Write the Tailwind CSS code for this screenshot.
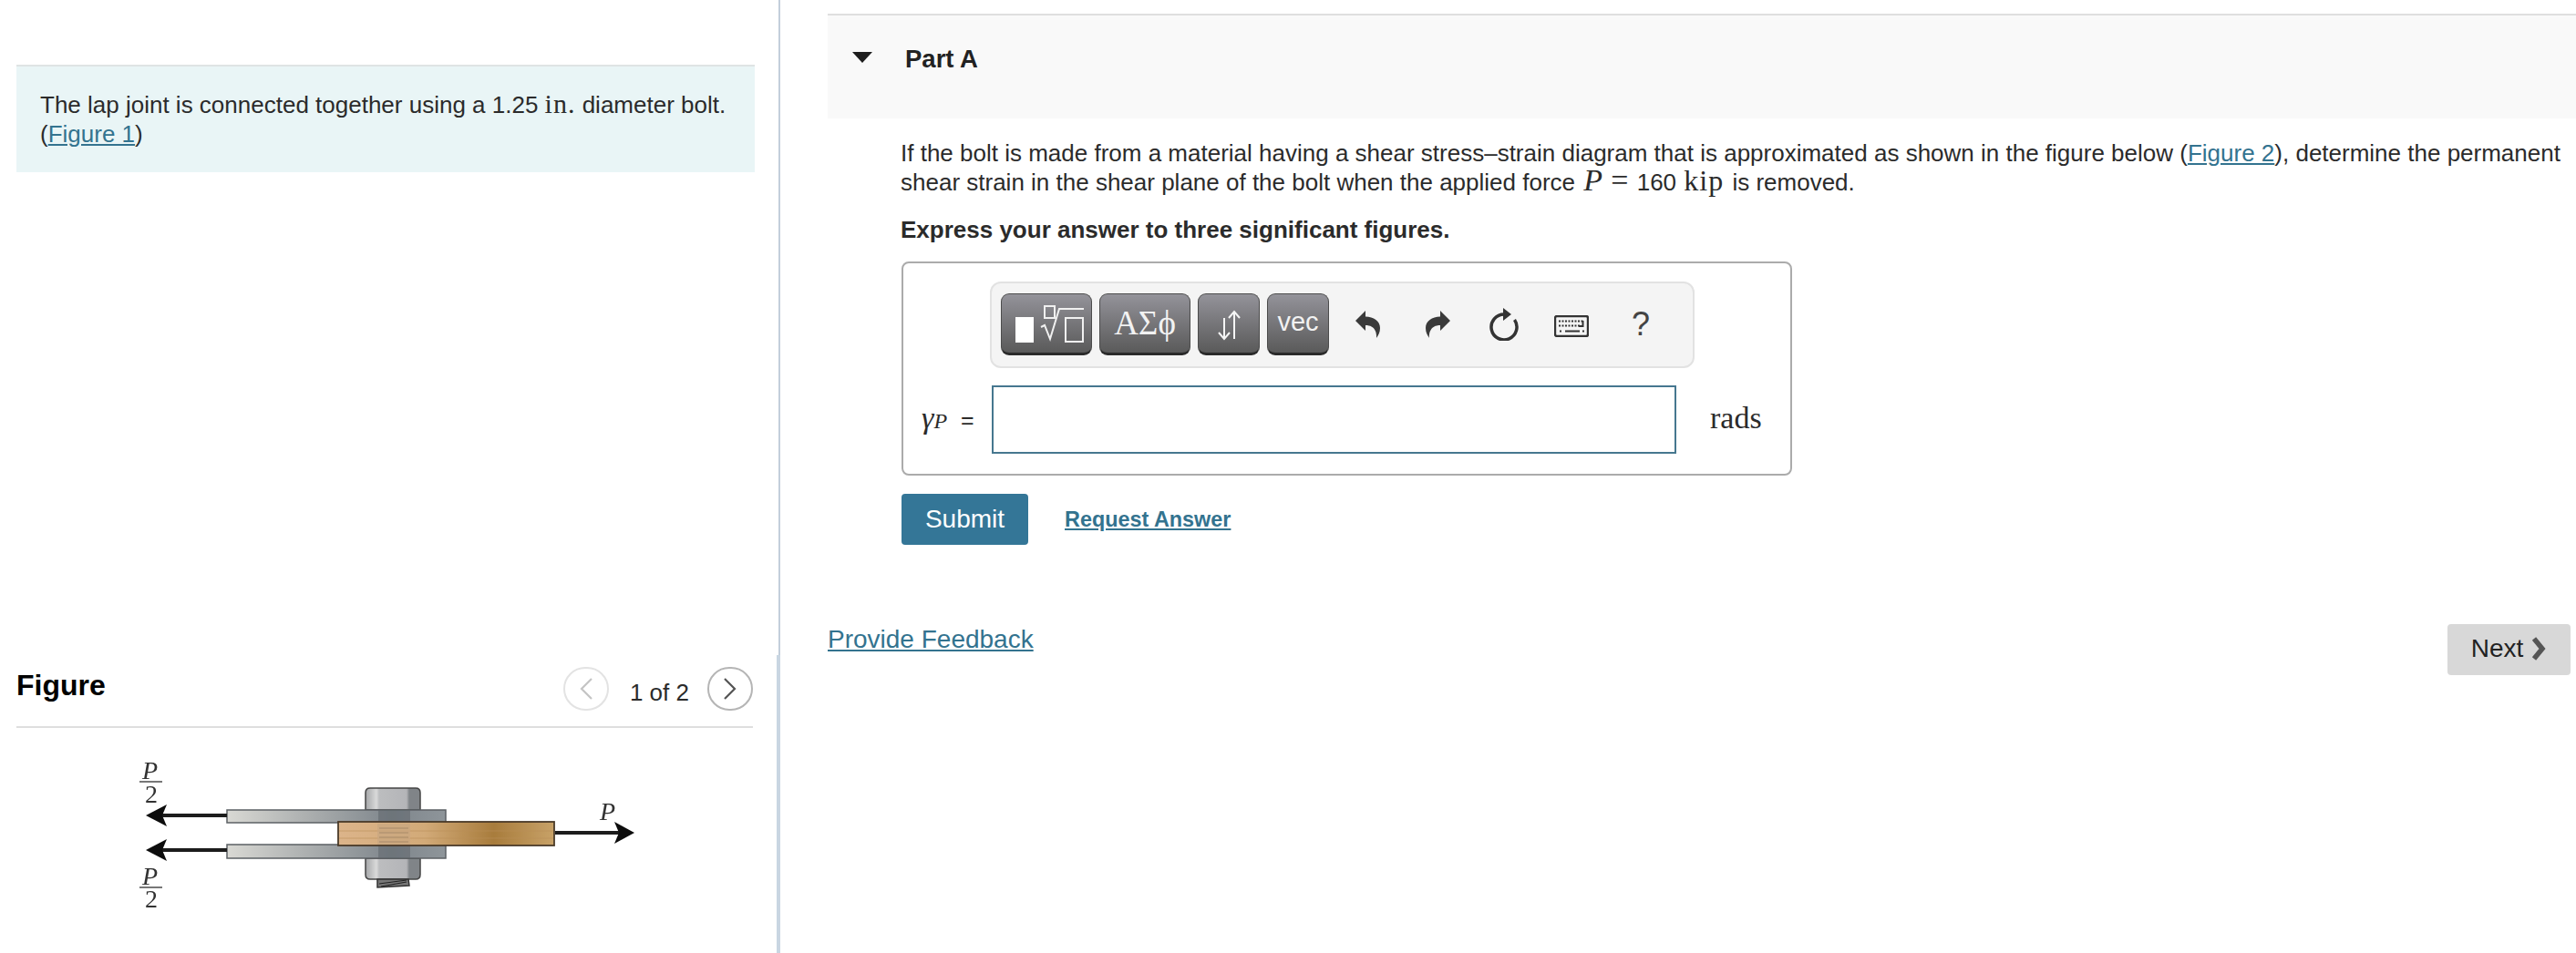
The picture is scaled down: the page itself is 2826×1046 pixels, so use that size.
<!DOCTYPE html>
<html>
<head>
<meta charset="utf-8">
<script src="https://cdn.jsdelivr.net/npm/@tailwindcss/browser@4"></script>
</head>
<body class="bg-white">
<div class="flex h-[1046px] w-[2826px] overflow-hidden bg-white text-[#2b2b2b] font-['Liberation_Sans',Arial,sans-serif] text-[26px] leading-[32px]">
  <!-- left column -->
  <div class="flex w-[856px] shrink-0 flex-col">
    <div class="h-[719px] border-r-2 border-[#c3cfdb] pt-[71px] pl-[18px]">
      <div class="h-[118px] w-[810px] border-t-2 border-[#dfe4e4] bg-[#e9f5f6] pt-[26px] pr-[20px] pl-[26px]">
        The lap joint is connected together using a 1.25 <span class="font-['Liberation_Serif',serif] text-[30px] leading-[0px] tracking-[1px]">in.</span> diameter bolt.<br>(<a class="text-[#33738f] underline underline-offset-2">Figure 1</a>)
      </div>
    </div>
    <div class="h-[327px] border-r-4 border-[#c9d6e2]">
      <div class="ml-[18px] flex w-[808px] items-start border-b-2 border-[#dedede] pt-[13px] pb-[17px]">
        <div class="text-[32px] leading-[40px] font-bold text-black">Figure</div>
        <div class="ml-auto flex items-start">
          <div class="flex h-[48px] w-[50px] items-center justify-center rounded-full border-2 border-[#e3e3e3]">
            <svg width="14" height="24" viewBox="0 0 14 24" fill="none" stroke="#c4c4c4" stroke-width="2.2"><path d="M13 1 2 12l11 11"/></svg>
          </div>
          <div class="mt-[12px] ml-[23px] mr-[20px]">1 of 2</div>
          <div class="flex h-[48px] w-[50px] items-center justify-center rounded-full border-2 border-[#b5b5b5]">
            <svg width="14" height="24" viewBox="0 0 14 24" fill="none" stroke="#555" stroke-width="2.2"><path d="M1 1l11 11L1 23"/></svg>
          </div>
        </div>
      </div>
      <svg class="ml-[120px] block" width="600" height="247" viewBox="120 799 600 247">
        <defs>
          <linearGradient id="pl" x1="0" x2="1" y1="0" y2="0">
            <stop offset="0" stop-color="#d9d9d4"/><stop offset=".35" stop-color="#aeb1b1"/><stop offset=".75" stop-color="#7f868c"/><stop offset="1" stop-color="#8e959a"/>
          </linearGradient>
          <linearGradient id="wd" x1="0" x2="1" y1="0" y2="0">
            <stop offset="0" stop-color="#dcb48a"/><stop offset=".4" stop-color="#d2aa78"/><stop offset=".72" stop-color="#a87c3c"/><stop offset="1" stop-color="#c8a268"/>
          </linearGradient>
          <linearGradient id="bt" x1="0" x2="1" y1="0" y2="0">
            <stop offset="0" stop-color="#a4a6a8"/><stop offset=".2" stop-color="#dadada"/><stop offset=".25" stop-color="#bcbdbf"/><stop offset=".75" stop-color="#b4b5b8"/><stop offset=".8" stop-color="#808488"/><stop offset="1" stop-color="#808488"/>
          </linearGradient>
          <filter id="sf"><feGaussianBlur stdDeviation="0.5"/></filter>
        </defs>
        <g filter="url(#sf)">
          <path d="M401 889v-19q0-5 5-5h50q5 0 5 5v19z" fill="url(#bt)" stroke="#444" stroke-width="1.5"/>
          <path d="M401 942v18q0 5 5 5h50q5 0 5-5v-18z" fill="url(#bt)" stroke="#444" stroke-width="1.5"/>
          <path d="M414 965h34l1 7-35 2z" fill="#777" stroke="#333" stroke-width="1.5"/>
          <path d="M416 970l30-4M418 973l28-5" stroke="#222" stroke-width="1.2"/>
          <rect x="249" y="889" width="240" height="14" fill="url(#pl)" stroke="#5c6064" stroke-width="1.5"/>
          <rect x="249" y="927" width="240" height="15" fill="url(#pl)" stroke="#5c6064" stroke-width="1.5"/>
          <rect x="415" y="889" width="35" height="14" fill="#5f666c" opacity=".55"/>
          <rect x="415" y="927" width="35" height="15" fill="#5f666c" opacity=".55"/>
          <rect x="371" y="902" width="237" height="26" fill="url(#wd)" stroke="#4b3a28" stroke-width="1.8"/>
          <path d="M372 912H607M372 920H607" stroke="#b98e58" stroke-width="1" opacity=".6"/>
          <rect x="414" y="904" width="36" height="23" fill="#c9a780" opacity=".7"/>
          <path d="M416 909h32M416 914h32M416 919h32M416 924h32" stroke="#a88a68" stroke-width="1.2"/>
          <path d="M249 895H175" stroke="#1a1a1a" stroke-width="4"/>
          <path d="M160 895l23-12-5 12 5 12z" fill="#111"/>
          <path d="M249 933H175" stroke="#1a1a1a" stroke-width="4"/>
          <path d="M160 933l23-12-5 12 5 12z" fill="#111"/>
          <path d="M609 914h72" stroke="#1a1a1a" stroke-width="4"/>
          <path d="M696 914l-22-12 5 12-5 12z" fill="#111"/>
          <path d="M153 858h25M153 974h25" stroke="#777" stroke-width="2.2"/>
          <g font-family="'Liberation Serif',serif" font-size="28" fill="#333">
            <text x="156" y="855" font-style="italic">P</text>
            <text x="159" y="881">2</text>
            <text x="156" y="971" font-style="italic">P</text>
            <text x="159" y="996">2</text>
            <text x="658" y="900" font-style="italic">P</text>
          </g>
        </g>
      </svg>
    </div>
  </div>

  <!-- right column -->
  <div class="min-w-0 flex-1 pt-[15px] pl-[52px]">
    <div class="flex h-[115px] items-start border-t-2 border-[#dfdfdf] bg-[#f9f9f9] pt-[32px]">
      <svg class="mt-[8px] ml-[27px]" width="22" height="12" viewBox="0 0 22 12"><path d="M0 0h22L11 12z" fill="#1d1d1d"/></svg>
      <div class="ml-[36px] text-[27.5px] font-bold text-[#222]">Part A</div>
    </div>
    <div class="pt-[22px] pl-[80px]">
      <div class="w-[1840px]">If the bolt is made from a material having a shear stress–strain diagram that is approximated as shown in the figure below (<a class="text-[#33738f] underline underline-offset-2">Figure 2</a>), determine the permanent shear strain in the shear plane of the bolt when the applied force <span class="ml-[2px] font-['Liberation_Serif',serif] text-[34px] leading-[0px] italic">P</span> <span class="ml-[2px] mr-[2px] font-['Liberation_Serif',serif] text-[34px] leading-[0px]">=</span> 160 <span class="ml-[1px] mr-[2px] font-['Liberation_Serif',serif] text-[32px] leading-[0px] tracking-[1px]">kip</span> is removed.</div>
      <div class="mt-[20px] font-bold">Express your answer to three significant figures.</div>

      <div class="mt-[19px] ml-[1px] h-[235px] w-[977px] rounded-[8px] border-2 border-[#ababab] pt-[20px]">
        <div class="ml-[95px] flex h-[95px] w-[773px] items-center rounded-[12px] border-2 border-[#e2e2e2] bg-[#f4f4f4] pb-[2px] pl-[10px]">
          <div class="flex h-[68px] w-[100px] items-center justify-center rounded-[9px] border border-[#4c4c4c] border-b-[3px] border-b-[#2a2a2a] bg-linear-to-b from-[#94939a] to-[#5a5a5a]">
            <svg width="98" height="64" viewBox="0 0 98 64" fill="none" stroke="#f0f0f0" stroke-width="2">
              <rect x="15" y="25" width="20" height="28" fill="#fff" stroke="none"/>
              <rect x="47" y="13" width="11" height="13"/>
              <path d="M43 36l4-2 6 15 10-33h27"/>
              <rect x="70" y="26" width="19" height="26"/>
            </svg>
          </div>
          <div class="ml-[8px] flex h-[68px] w-[100px] items-center justify-center rounded-[9px] border border-[#4c4c4c] border-b-[3px] border-b-[#2a2a2a] bg-linear-to-b from-[#94939a] to-[#5a5a5a] font-['Liberation_Serif',serif] text-[37px] whitespace-nowrap text-[#f2f2f2]">ΑΣϕ</div>
          <div class="ml-[8px] flex h-[68px] w-[68px] items-center justify-center rounded-[9px] border border-[#4c4c4c] border-b-[3px] border-b-[#2a2a2a] bg-linear-to-b from-[#94939a] to-[#5a5a5a]">
            <svg width="66" height="64" viewBox="0 0 66 64" fill="none" stroke="#f5f5f5" stroke-width="2"><path d="M28 26V49M22 42l6 7 6-7M39 19V49M33 26l6-7 6 7"/></svg>
          </div>
          <div class="ml-[8px] flex h-[68px] w-[68px] items-center justify-center rounded-[9px] border border-[#4c4c4c] border-b-[3px] border-b-[#2a2a2a] bg-linear-to-b from-[#94939a] to-[#5a5a5a] pb-[3px] text-[29px] text-[#f2f2f2]">vec</div>
          <svg class="ml-[29px]" width="27" height="30" viewBox="0 0 27 30"><path d="M0 11 11 0v6.5C20 7 27 11 27 19c0 5-2 8-4 11 .5-5-1-14-12-14v6z" fill="#3a3a3a"/></svg>
          <svg class="ml-[50px]" width="27" height="30" viewBox="0 0 27 30"><path d="M27 11 16 0v6.5C7 7 0 11 0 19c0 5 2 8 4 11-.5-5 1-14 12-14v6z" fill="#3a3a3a"/></svg>
          <svg class="ml-[43px]" width="32" height="36" viewBox="0 0 32 36" fill="none"><path d="M16 7A14 14 0 1 0 27.500 13" stroke="#333" stroke-width="3.500"/><path d="M15 0l9 7-9 7z" fill="#333"/></svg>
          <svg class="mt-[4px] ml-[39px]" width="38" height="24" viewBox="0 0 38 24" fill="none">
            <rect x="1" y="1" width="36" height="22" rx="2" stroke="#333" stroke-width="2.400"/>
            <path d="M5 6.500h28M5 11.500h24M6 17.500h3M31 17.500h2" stroke="#333" stroke-width="2.200" stroke-dasharray="2 1.500"/>
            <path d="M12 17.500h16M31.500 6v6H27" stroke="#333" stroke-width="2"/>
          </svg>
          <div class="ml-[47px] text-[36px] leading-[36px] font-light text-[#444]">?</div>
        </div>
        <div class="mt-[19px] flex items-center">
          <div class="ml-[20px] w-[77px] font-['Liberation_Serif',serif] text-[34px] leading-[32px] whitespace-nowrap italic">γ<span class="text-[24px]">P</span><span class="ml-[15px] font-['Liberation_Sans',sans-serif] text-[25px] not-italic">=</span></div>
          <div class="h-[75px] w-[751px] border-2 border-[#46778f] bg-white"></div>
          <div class="-mt-[4px] ml-[37px] font-['Liberation_Serif',serif] text-[34px] leading-[32px]">rads</div>
        </div>
      </div>

      <div class="mt-[20px] ml-[1px] flex items-center">
        <div class="flex h-[56px] w-[139px] items-center justify-center rounded-[4px] bg-[#347697] text-[28px] text-white">Submit</div>
        <a class="ml-[40px] text-[23.4px] font-bold text-[#33738f] underline underline-offset-2">Request Answer</a>
      </div>
    </div>
    <div class="mt-[87px] flex items-start justify-between pr-[6px]">
      <a class="mt-[1px] text-[28px] text-[#33738f] underline underline-offset-2">Provide Feedback</a>
      <div class="flex h-[56px] w-[135px] items-center justify-center gap-[8px] rounded-[4px] bg-[#d8d8d8] pb-[2px] text-[28px] text-[#222]">Next
        <svg width="18" height="28" viewBox="0 0 18 28" fill="none" stroke="#555" stroke-width="5.500"><path d="M4 3l9 11-9 11"/></svg>
      </div>
    </div>
  </div>
</div>
</body>
</html>
